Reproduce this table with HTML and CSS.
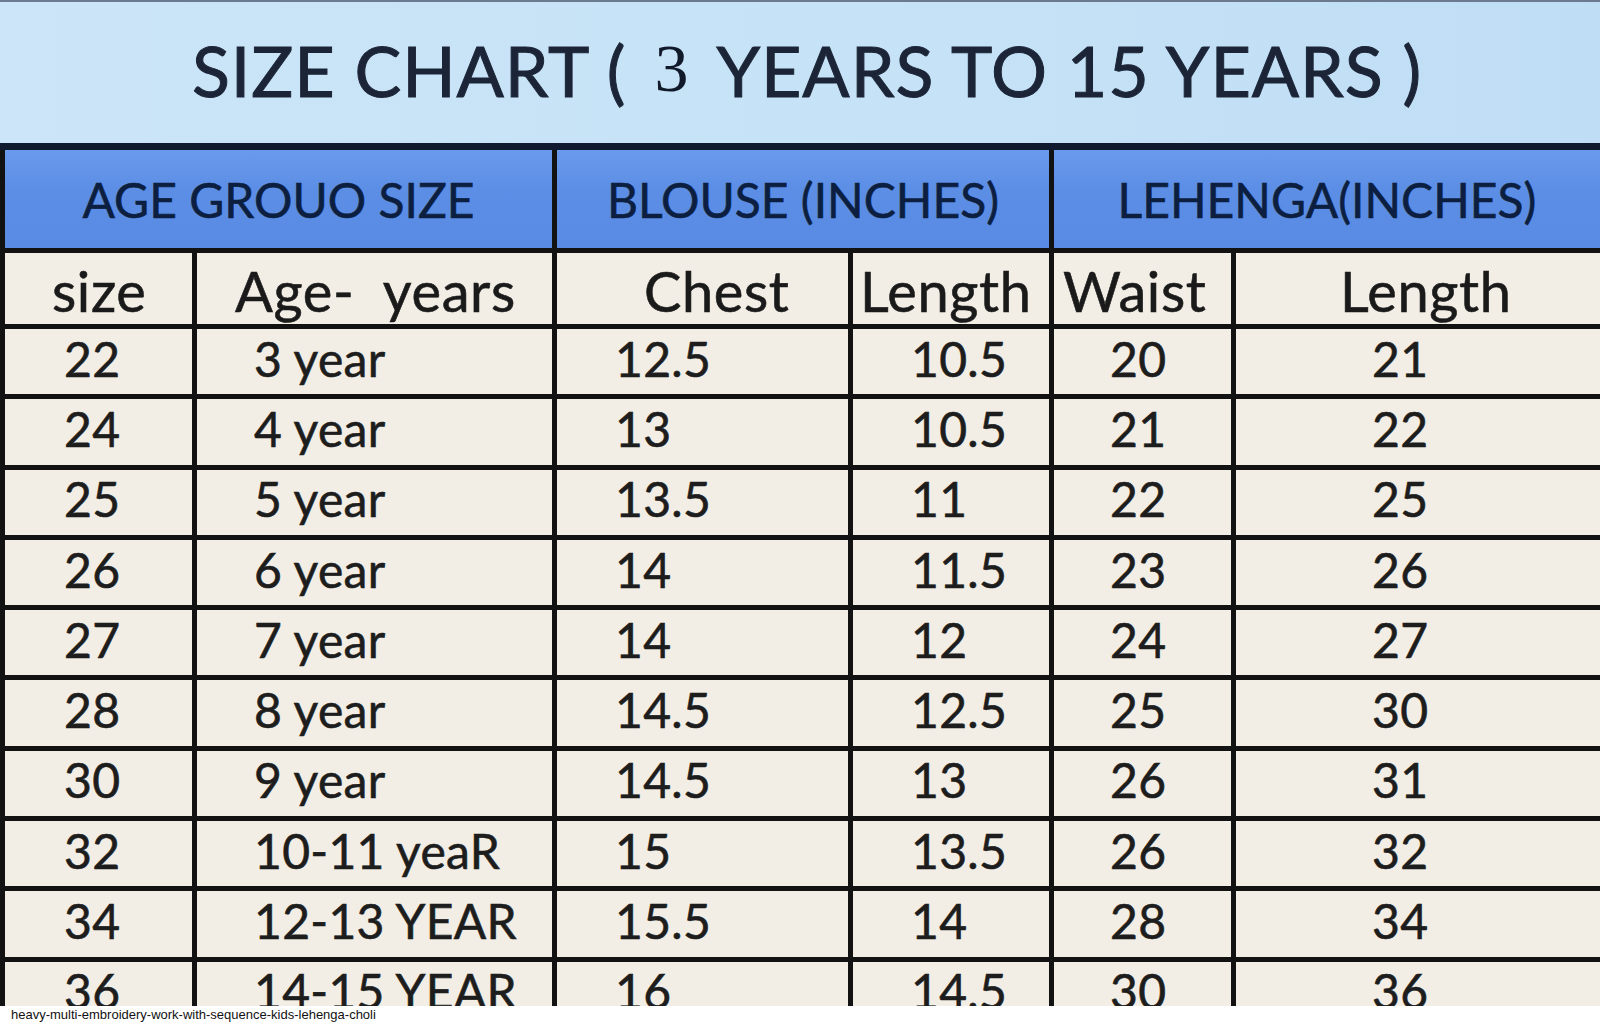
FILE: index.html
```html
<!DOCTYPE html>
<html lang="en">
<head>
<meta charset="utf-8">
<title>Size Chart</title>
<link rel="stylesheet" href="styles.css">
</head>
<body>
<figure class="figure">
  <div class="chart">
    <div class="title"><span>SIZE CHART (</span><span class="three">3</span><span>YEARS TO 15 YEARS )</span></div>
    <div class="grid">
      <div class="cell head1 span2">AGE GROUO SIZE</div>
      <div class="cell head1 span2">BLOUSE (INCHES)</div>
      <div class="cell head1 span2 last">LEHENGA(INCHES)</div>

      <div class="cell head2 h1">size</div>
      <div class="cell head2 h2">Age-  years</div>
      <div class="cell head2 h3">Chest</div>
      <div class="cell head2 h4">Length</div>
      <div class="cell head2 h5">Waist</div>
      <div class="cell head2 h6 last">Length</div>

      <div class="cell c1">22</div><div class="cell c2">3 year</div><div class="cell c3">12.5</div><div class="cell c4">10.5</div><div class="cell c5">20</div><div class="cell c6 last">21</div>
      <div class="cell c1">24</div><div class="cell c2">4 year</div><div class="cell c3">13</div><div class="cell c4">10.5</div><div class="cell c5">21</div><div class="cell c6 last">22</div>
      <div class="cell c1">25</div><div class="cell c2">5 year</div><div class="cell c3">13.5</div><div class="cell c4">11</div><div class="cell c5">22</div><div class="cell c6 last">25</div>
      <div class="cell c1">26</div><div class="cell c2">6 year</div><div class="cell c3">14</div><div class="cell c4">11.5</div><div class="cell c5">23</div><div class="cell c6 last">26</div>
      <div class="cell c1">27</div><div class="cell c2">7 year</div><div class="cell c3">14</div><div class="cell c4">12</div><div class="cell c5">24</div><div class="cell c6 last">27</div>
      <div class="cell c1">28</div><div class="cell c2">8 year</div><div class="cell c3">14.5</div><div class="cell c4">12.5</div><div class="cell c5">25</div><div class="cell c6 last">30</div>
      <div class="cell c1">30</div><div class="cell c2">9 year</div><div class="cell c3">14.5</div><div class="cell c4">13</div><div class="cell c5">26</div><div class="cell c6 last">31</div>
      <div class="cell c1">32</div><div class="cell c2">10-11 yeaR</div><div class="cell c3">15</div><div class="cell c4">13.5</div><div class="cell c5">26</div><div class="cell c6 last">32</div>
      <div class="cell c1">34</div><div class="cell c2">12-13 YEAR</div><div class="cell c3">15.5</div><div class="cell c4">14</div><div class="cell c5">28</div><div class="cell c6 last">34</div>
      <div class="cell c1 cut">36</div><div class="cell c2 cut">14-15 YEAR</div><div class="cell c3 cut">16</div><div class="cell c4 cut">14.5</div><div class="cell c5 cut">30</div><div class="cell c6 cut last">36</div>
    </div>
  </div>
  <figcaption class="caption">heavy-multi-embroidery-work-with-sequence-kids-lehenga-choli</figcaption>
</figure>
</body>
</html>
```

FILE: styles.css
```css
html, body {
  margin: 0;
  padding: 0;
  background: #ffffff;
}

.figure {
  margin: 0;
  width: 1600px;
}

.chart {
  width: 1600px;
  height: 1006px;
  overflow: hidden;
  background: #f2eee5;
}

.title {
  box-sizing: border-box;
  height: 150px;
  border-top: 2px solid #6b7a8e;
  border-bottom: 7px solid #101a2e;
  background: linear-gradient(90deg, #cce5f8 0%, #c5e2f6 60%, #bfddf5 100%);
  padding: 31px 0 0 14px;
  display: flex;
  justify-content: center;
  align-items: flex-start;
  gap: 24px;
  font-family: Lato, "Liberation Sans", sans-serif;
  font-size: 70px;
  line-height: 74px;
  letter-spacing: 0.9px;
  color: #1c2537;
  -webkit-text-stroke: 1px #1c2537;
  white-space: pre;
}

.title .three {
  font-family: "Liberation Serif", serif;
  font-size: 68px;
  line-height: 74px;
  letter-spacing: 0;
  color: #111a2a;
  -webkit-text-stroke: 0;
  margin: -2px 4px 0 4px;
}

.grid {
  display: grid;
  grid-template-columns: 192px 360px 296px 201px 182px 369px;
  grid-template-rows: 103px 76px repeat(9, 70.3px) 70px;
}

.cell {
  box-sizing: border-box;
  border-left: 5px solid #121212;
  border-bottom: 5px solid #121212;
  display: flex;
  align-items: center;
  font-family: Lato, "Liberation Sans", sans-serif;
  font-size: 48px;
  line-height: 1;
  letter-spacing: 0.3px;
  color: #1d1d1d;
  -webkit-text-stroke: 0.6px #1d1d1d;
  white-space: pre;
  background: #f2eee5;
  padding-bottom: 6px;
}

.span2 {
  grid-column: span 2;
}

.head1 {
  justify-content: center;
  background: linear-gradient(180deg, #6a9aec 0%, #5c8ee6 40%, #5a8be4 100%);
  color: #0c1f40;
  -webkit-text-stroke: 0.6px #0c1f40;
  font-size: 48px;
  letter-spacing: 0;
  padding-top: 2px;
  padding-bottom: 0;
}

.head2 {
  font-size: 56px;
  letter-spacing: 0.6px;
  color: #1a1a1a;
  padding-top: 4px;
  padding-bottom: 0;
}

.h1 { padding-left: 47px; }
.h2 { padding-left: 38px; }
.h3 { padding-left: 87px; }
.h4 { padding-left: 7px; }
.h5 { padding-left: 9px; }
.h6 { padding-left: 104px; }

.c1 { padding-left: 59px; }
.c2 { padding-left: 57px; }
.c3 { padding-left: 58px; }
.c4 { padding-left: 58px; }
.c5 { padding-left: 56px; }
.c6 { padding-left: 136px; }

.cut {
  overflow: hidden;
}

.caption {
  margin: 0;
  padding: 1px 0 0 11px;
  font-family: "Liberation Sans", Arial, sans-serif;
  font-size: 13px;
  color: #111111;
}
```
